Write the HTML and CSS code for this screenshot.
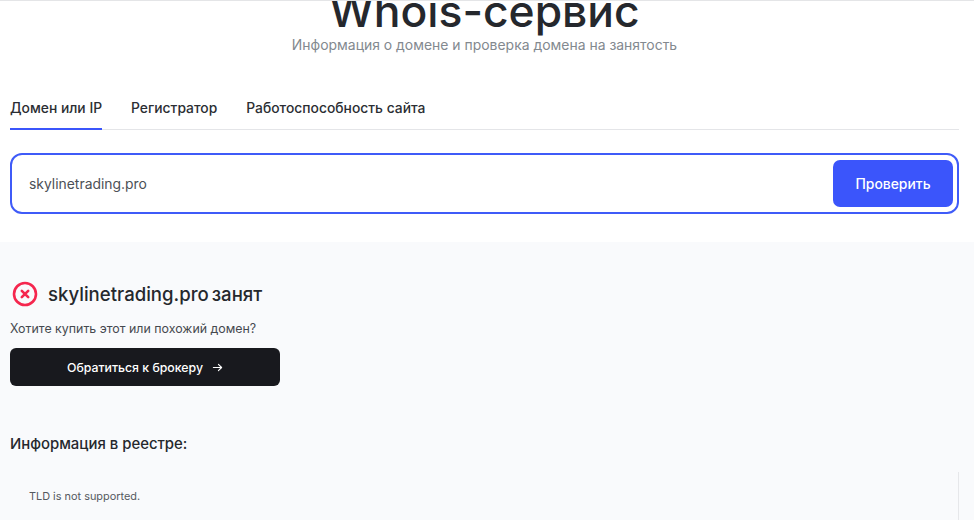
FILE: index.html
```html
<!DOCTYPE html>
<html lang="ru">
<head>
<meta charset="utf-8">
<title>Whois-сервис</title>
<link rel="stylesheet" href="styles.css">
</head>
<body>
<div class="top-line"></div>
<section class="search">
  <header class="hero">
    <h1 class="hero-title">Whois-сервис</h1>
    <p class="hero-sub">Информация о домене и проверка домена на занятость</p>
  </header>
  <nav class="tabs">
    <a class="tab tab-active">Домен или IP</a>
    <a class="tab">Регистратор</a>
    <a class="tab">Работоспособность сайта</a>
  </nav>
  <form class="field">
    <span class="field-value">skylinetrading.pro</span>
    <span class="field-btn">Проверить</span>
  </form>
</section>
<section class="result">
  <div class="status">
    <svg class="status-icon" viewBox="0 0 26 26" width="26" height="26" fill="none" stroke="#f5264e" stroke-linecap="round">
      <circle cx="13" cy="13" r="11" stroke-width="2.6"/>
      <path d="M9.8 9.8l6.4 6.4M16.2 9.8l-6.4 6.4" stroke-width="2.6"/>
    </svg>
    <h2 class="status-text"><span>skylinetrading.pro</span> <span>занят</span></h2>
  </div>
  <p class="offer">Хотите купить этот или похожий домен?</p>
  <a class="broker">Обратиться к брокеру
    <svg class="broker-arrow" viewBox="0 0 12 12" width="11" height="11" fill="none" stroke="#fff" stroke-width="1.2" stroke-linecap="round" stroke-linejoin="round">
      <path d="M1.5 6h9M7 2.5L10.5 6 7 9.5"/>
    </svg>
  </a>
  <h3 class="registry-title">Информация в реестре:</h3>
  <div class="registry"><span class="registry-text">TLD is not supported.</span></div>
</section>
</body>
</html>
```
FILE: styles.css
```css
* { box-sizing: border-box; }
html, body { margin: 0; padding: 0; }
body {
  width: 974px;
  height: 520px;
  overflow: hidden;
  background: #fff;
  font-family: Inter, "Liberation Sans", sans-serif;
  color: #25282d;
}
.top-line { height: 1px; background: #e4e5e7; }
.search { padding: 0 15px 0 10px; height: 241px; }
.hero { text-align: center; height: 97px; overflow: hidden; }
.hero-title {
  margin: -17px 0 0;
  font-size: 44.4px;
  line-height: 54px;
  font-weight: 500;
  color: #25282d;
}
.hero-sub {
  margin: -3px 0 0;
  font-size: 13.95px;
  line-height: 20px;
  color: #83898f;
}
.tabs {
  display: flex;
  gap: 29px;
  height: 32px;
  border-bottom: 1px solid #e4e5e8;
}
.tab {
  font-size: 13.85px;
  line-height: 20px;
  font-weight: 500;
  color: #2b2e33;
  height: 32px;
}
.tab-active { border-bottom: 2px solid #3b55fb; }
.field {
  display: flex;
  align-items: center;
  justify-content: space-between;
  height: 61px;
  margin-top: 23px;
  padding: 0 4px 0 17px;
  border: 2px solid #3f5bf8;
  border-radius: 12px;
  background: #fff;
}
.field-value { font-size: 13.9px; color: #4c5056; }
.field-btn {
  display: flex;
  align-items: center;
  justify-content: center;
  width: 120px;
  height: 47px;
  border-radius: 7px;
  background: #3b55fb;
  color: #fff;
  font-size: 13.9px;
  font-weight: 500;
}
.result {
  height: 278px;
  padding: 39px 15px 0 10px;
  background: #f9fafc;
}
.status { display: flex; align-items: center; gap: 10px; height: 26px; padding-left: 2px; }
.status-icon { flex: none; }
.status-text { margin: 0; font-size: 18.6px; line-height: 26px; font-weight: 500; color: #25282d; word-spacing: -2px; }
.offer { margin: 13px 0 0; font-size: 12.4px; line-height: 18px; color: #45494f; }
.broker {
  display: flex;
  align-items: center;
  justify-content: center;
  gap: 9px;
  width: 270px;
  height: 38px;
  margin-top: 10px;
  border-radius: 6px;
  background: #18191e;
  color: #fff;
  font-size: 12.3px;
  font-weight: 500;
}
.registry-title { margin: 48px 0 0; font-size: 14.9px; line-height: 20px; font-weight: 500; color: #25282d; }
.registry {
  height: 49px;
  margin-top: 18px;
  padding: 12px 0 0 19px;
  border-right: 1px solid #e6e7ea;
  border-bottom: 1px solid #e0e1e4;
}
.registry-text { font-size: 10.9px; line-height: 16px; color: #55595f; }
```
